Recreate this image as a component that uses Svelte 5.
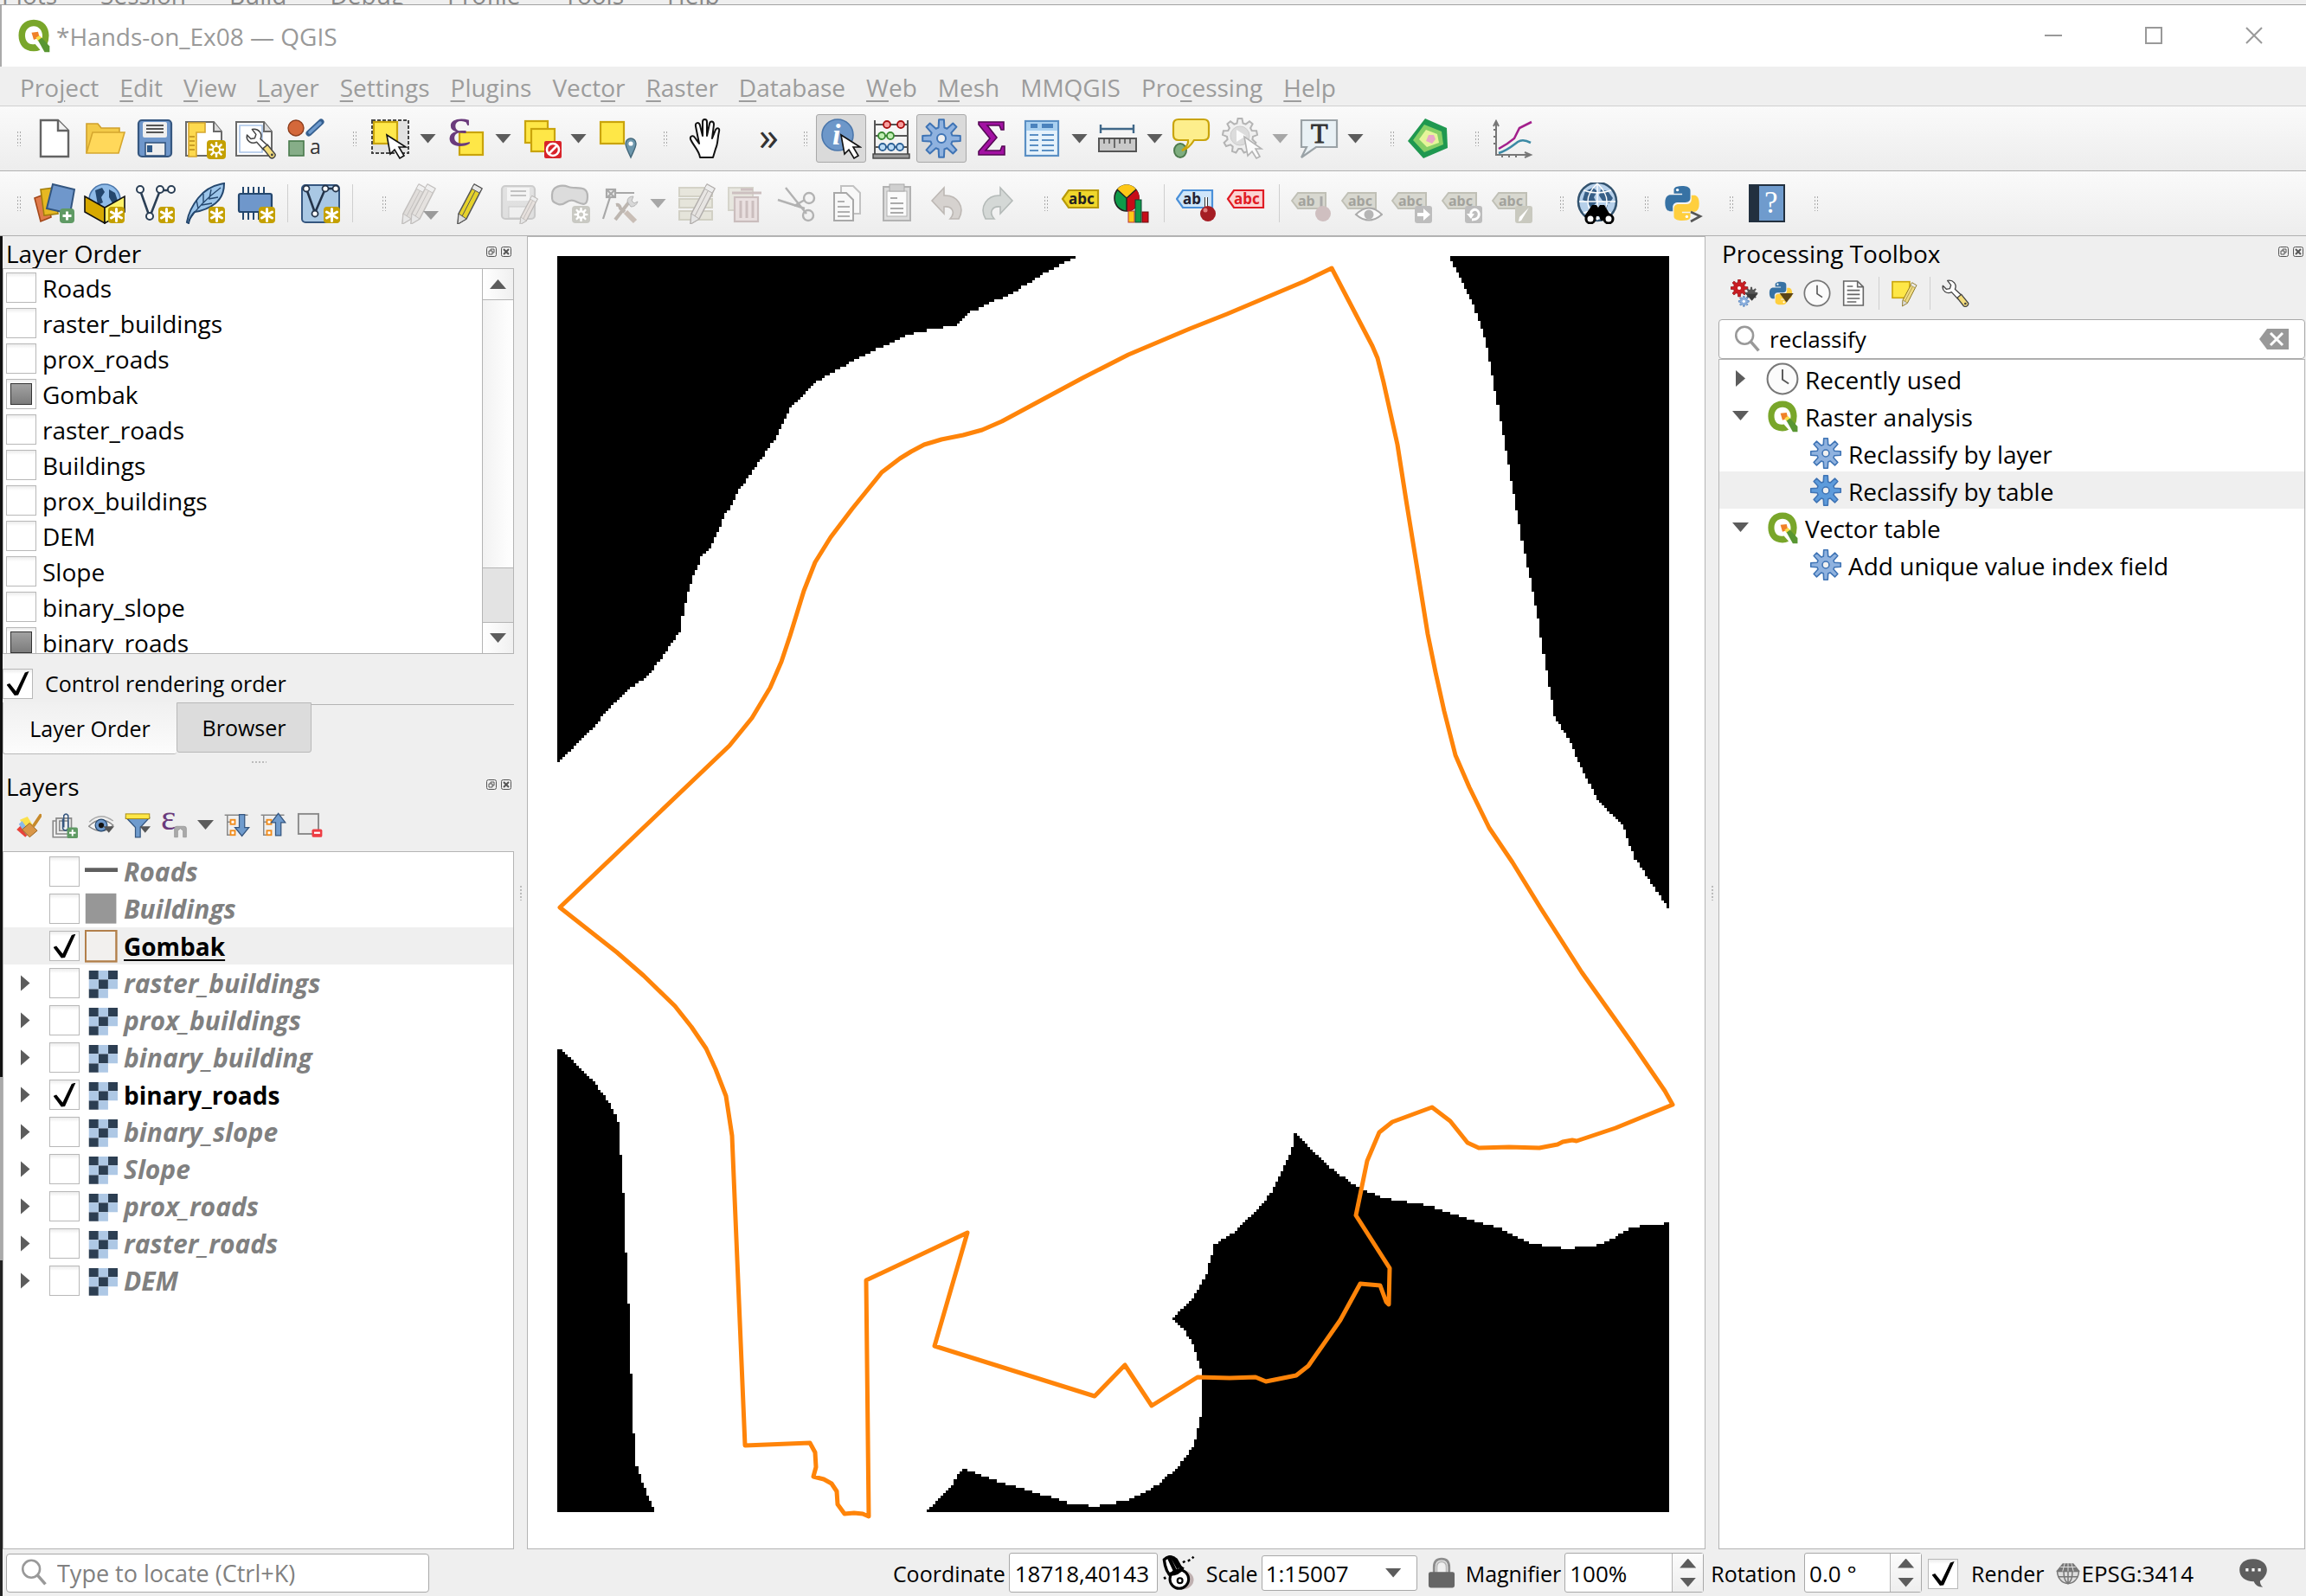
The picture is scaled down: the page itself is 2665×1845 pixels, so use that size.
<script>
  // Outline of a cog wheel with n rounded teeth.
  function cog(cx, cy, outer, inner, n) {
    let d = '';
    const step = (Math.PI * 2) / n;
    for (let i = 0; i < n; i++) {
      const a = i * step - Math.PI / 2;
      const pts = [
        [inner, a - step * 0.34],
        [outer, a - step * 0.17],
        [outer, a + step * 0.17],
        [inner, a + step * 0.34]
      ];
      for (const [r, t] of pts) {
        d += (d ? 'L' : 'M') + (cx + r * Math.cos(t)).toFixed(1) + ' ' + (cy + r * Math.sin(t)).toFixed(1);
      }
    }
    return d + 'z';
  }

  const gearBadge = `<rect x="26" y="26" width="22" height="22" rx="4" fill="#c4a000"/><path d="${cog(37, 37, 9, 5, 8)}" fill="#fff"/><circle cx="37" cy="37" r="3" fill="#c4a000"/>`;
  const starBadge = `<rect x="28" y="28" width="19" height="19" rx="4" fill="#c4a000"/><path d="M37.500 30.500v14M31.500 34l12 7M31.500 41l12-7" stroke="#fff" stroke-width="3" stroke-linecap="round"/>`;
  const cursor = `<path d="M20 20l4 22 5-5 6 10 5-3-6-10h8z" fill="#fff" stroke="#111" stroke-width="1.600"/>`;
  const pencil = (fill, line) => `<path d="M33 2l9 5-18 35-10 6 1-12z" fill="${fill}" stroke="${line}" stroke-width="1.600" stroke-linejoin="round"/><path d="M33 2l9 5-3 5-9-5z" fill="#e8e8e8" stroke="${line}"/><path d="M15 36l9 6-10 6z" fill="#ddd" stroke="${line}"/><path d="M34 10L19 39" stroke="${line}" stroke-width="1"/>`;
  const tag = (fill, line, ink, txt) => `<path d="M1 24L8 14H42V34H8z" fill="${fill}" stroke="${line}" stroke-width="2.200"/><text x="8" y="30" font-family="Noto Sans" font-weight="700" font-size="17" fill="${ink}">${txt}</text>`;
  const greyTag = (txt) => `<path d="M1 21L8 12H40V30H8z" fill="#d8d8d0" stroke="#c0c0b6" stroke-width="2"/><text x="8" y="27" font-family="Noto Sans" font-weight="700" font-size="16" fill="#a2a29c">${txt}</text>`;
  const snakeHalf = (fill) => `<path d="M23.900 4c-10 0-9.400 4.300-9.400 4.300v4.500h9.600v1.400H10.700S4.300 13.400 4.300 23.600s5.600 9.600 5.600 9.600h3.300v-4.700s-.2-5.600 5.500-5.600h9.500s5.300.1 5.300-5.100V9.300S34.300 4 23.900 4z" fill="${fill}"/><circle cx="18.600" cy="8.600" r="1.700" fill="#fff"/>`;
  const snake = `${snakeHalf('#3772a4')}<g transform="rotate(180 24 24)">${snakeHalf('#ffcf3e')}</g>`;
  const vnodes = (c) => `<path d="M7 9L18 40L30 9H43" fill="none" stroke="${c}" stroke-width="2.600"/><circle cx="7" cy="8" r="4" fill="#fff" stroke="${c}" stroke-width="2"/><circle cx="18" cy="39" r="4" fill="#fff" stroke="${c}" stroke-width="2"/><circle cx="30" cy="8" r="4" fill="#fff" stroke="${c}" stroke-width="2"/><circle cx="43" cy="8" r="4" fill="#fff" stroke="${c}" stroke-width="2"/>`;
  const wrench = `<path d="M10 2l6 8-2 6-6 1-6-6c-2 9 7 15 15 11l11 12 7-6-12-11c4-8-3-17-13-15z" fill="#fff" stroke="#444" stroke-width="2" stroke-linejoin="round"/><path d="M27 32l7-6 12 15c1 4-4 8-8 5z" fill="#f3dc7c" stroke="#444" stroke-width="2"/><circle cx="41" cy="42" r="2" fill="#444"/>`;
  const clock = `<circle cx="24" cy="24" r="22" fill="#fbfbfb" stroke="#777" stroke-width="2.600"/><path d="M24 10V25L33 31" fill="none" stroke="#555" stroke-width="2.400"/>`;
  const blueGear = (f) => `<path d="${cog(24, 24, 22, 13, 8)}" fill="${f}" stroke="#3f74b5" stroke-width="2" stroke-linejoin="round"/><circle cx="24" cy="24" r="5" fill="#f0f0f0" stroke="#3f74b5" stroke-width="2"/>`;
  const globe = `<circle cx="24" cy="22" r="22" fill="#b6d0ea" stroke="#33536f" stroke-width="2.600"/><path d="M10 10l9-4 5 4-4 7 3 6-6 7-5-8-5-2zM28 8l8 2 6 8-4 6-8-3-4-6zM28 28l8-2-3 8-5 2z" fill="#375f87"/><path d="M24 1v42M3 22h42M8 9q16 6 32 0M8 35q16-6 32 0M24 1Q2 22 24 43M24 1Q46 22 24 43" fill="none" stroke="#fff" stroke-width="1.400"/>`;
  const tree = `<path d="M1 5H44M6 5V42H16M6 18H16" fill="none" stroke="#888" stroke-width="2.400"/><rect x="12" y="14" width="8" height="8" fill="#fff" stroke="#f08c1c" stroke-width="3"/><rect x="12" y="34" width="8" height="8" fill="#fff" stroke="#f08c1c" stroke-width="3"/>`;

  const icons = {
    page: `<path d="M8 3H28L40 15V45H8z" fill="#fff" stroke="#636363" stroke-width="2.400"/><path d="M28 3V15H40" fill="#f2f2f2" stroke="#636363" stroke-width="2.400"/>`,
    folder: `<path d="M3 7H16L20 12H41V20L40 40H3z" fill="#f3ca49" stroke="#cfa02c" stroke-width="1.600"/><path d="M10 17H47L40 41H3z" fill="#ffd85a" stroke="#d5a62e" stroke-width="1.600"/>`,
    disk: `<rect x="5" y="3" width="38" height="42" rx="4" fill="#6f97cb" stroke="#35567f" stroke-width="2.200"/><rect x="10" y="5" width="28" height="18" rx="2" fill="#efefef"/><path d="M14 9H34M14 13H34M14 17H34" stroke="#555" stroke-width="1.800"/><rect x="13" y="29" width="23" height="15" fill="#eee" stroke="#35567f" stroke-width="1.600"/><rect x="15" y="32" width="6" height="8" fill="#2f5a89"/>`,
    layout: `<path d="M2 5H34L43 16V44H2z" fill="#fff" stroke="#6a6a6a" stroke-width="2"/><path d="M34 5V16H43" fill="#ddd" stroke="#6a6a6a" stroke-width="2"/><path d="M5 6H24V17H14V45H5z" fill="#fdd94e" stroke="#d5a62e" stroke-width="1.600"/><path d="M6 22h6M6 27h6M6 32h6M6 37h6" stroke="#b98b1a" stroke-width="1.400"/>${gearBadge}`,
    manager: `<path d="M2 5H34L43 16V44H2z" fill="#fff" stroke="#6a6a6a" stroke-width="2"/><path d="M34 5V16H43" fill="#ddd" stroke="#6a6a6a" stroke-width="2"/><path d="M6 9H32V40H6z" fill="none" stroke="#a9c4e8" stroke-width="1.600"/><g transform="translate(13 12) scale(.74)">${wrench}</g>`,
    style: `<circle cx="13" cy="12" r="9" fill="#d4683a" stroke="#8c3d1c" stroke-width="1.400"/><path d="M28 18L42 5" stroke="#355f8f" stroke-width="7" stroke-linecap="round"/><path d="M29 17L41 6" stroke="#6f9bcd" stroke-width="3.500" stroke-linecap="round"/><rect x="5" y="27" width="17" height="17" fill="#86ad88" stroke="#48794b" stroke-width="1.600"/><text x="29" y="42" font-family="Open Sans" font-size="23" fill="#333">a</text>`,
    select: `<rect x="3" y="3" width="42" height="38" fill="#e2e2e2" stroke="#444" stroke-width="2" stroke-dasharray="4 2"/><rect x="5" y="5" width="27" height="25" fill="#ffe84b" stroke="#c9a40b" stroke-width="2.200"/>${cursor}`,
    expr: `<rect x="17" y="17" width="27" height="26" fill="#fee747" stroke="#c9a40b" stroke-width="2.200"/><text x="3" y="32" font-family="Liberation Serif" font-size="66" fill="#6a3a7c">ε</text>`,
    deselect: `<rect x="6" y="4" width="26" height="25" fill="#fee747" stroke="#c9a40b" stroke-width="2.200"/><rect x="13" y="13" width="27" height="26" fill="#fee747" stroke="#c9a40b" stroke-width="2.200"/><rect x="28" y="27" width="20" height="20" rx="2" fill="#d8232a"/><circle cx="38" cy="37" r="7" fill="none" stroke="#fff" stroke-width="2.600"/><path d="M33 42L43 32" stroke="#fff" stroke-width="2.600"/>`,
    locate: `<rect x="6" y="5" width="27" height="25" fill="#fee747" stroke="#c9a40b" stroke-width="2.200"/><path d="M41 46C37 37 35 34 35 30a6 6 0 0 1 12 0c0 4-2 7-6 16z" fill="#6d97ad" stroke="#45697c" stroke-width="1.400"/><circle cx="41" cy="30" r="2.600" fill="#fff"/>`,
    hand: `<g transform="translate(4 0)"><path d="M19 46C18 38 11 32 8 25c-1-4 3-5 5-2l5 7L14 10c-1-5 4-5 5-1l3 12V5c0-4 5-4 5 0v16l3-14c1-4 5-3 5 1l-2 16 4-10c2-3 5-2 4 2-2 8-1 14-4 20l-3 10z" fill="#fff" stroke="#111" stroke-width="2" stroke-linejoin="round"/></g>`,
    info: `<circle cx="20" cy="20" r="18" fill="#6d97c9" stroke="#4a76ab" stroke-width="1.600"/><text x="14" y="31" font-family="Liberation Serif" font-style="italic" font-weight="700" font-size="34" fill="#fff">i</text><g transform="translate(4 0)">${cursor}</g>`,
    abacus: `<path d="M5 3V44M43 3V44M5 8H43M5 21H43M5 34H43" stroke="#555" stroke-width="2"/><rect x="3" y="42" width="42" height="5" fill="#999" stroke="#444" stroke-width="1.400"/><g stroke-width="1.800"><g fill="#f8a0a0" stroke="#a11"><circle cx="19" cy="8" r="4"/><circle cx="35" cy="8" r="4"/></g><g fill="#c2efb4" stroke="#3a8a33"><circle cx="13" cy="21" r="4"/><circle cx="23" cy="21" r="4"/></g><g fill="#bcdcf6" stroke="#2b6095"><circle cx="14" cy="34" r="4"/><circle cx="24" cy="34" r="4"/><circle cx="34" cy="34" r="4"/></g></g>`,
    gear: blueGear('#8fb2df'),
    gearDark: blueGear('#5d9bdb'),
    sigma: `<path d="M9 5H38V14H35L33 9H19L30 23L17 38H34L36 33H39V43H9V39L22 24L9 8z" fill="#a311a3" stroke="#560956" stroke-width="1.600"/>`,
    table: `<rect x="5" y="4" width="38" height="40" fill="#e6f2fb" stroke="#5a8fc4" stroke-width="2.200"/><rect x="6" y="5" width="36" height="10" fill="#a9d0f0"/><rect x="11" y="7" width="8" height="5" fill="#4a82bd"/><rect x="24" y="7" width="13" height="5" fill="#4a82bd"/><path d="M10 20h10M24 20h14M10 26h10M24 26h14M10 32h10M24 32h14M10 38h10M24 38h14" stroke="#5a8fc4" stroke-width="2"/>`,
    ruler: `<path d="M5 13H43M5 8V18M43 8V18" stroke="#3f6788" stroke-width="2.400"/><rect x="3" y="24" width="43" height="15" fill="#c9c9c9" stroke="#555" stroke-width="2"/><path d="M9 24v6M15 24v6M21 24v11M27 24v6M33 24v6M39 24v6" stroke="#444" stroke-width="1.400"/>`,
    tip: `<ellipse cx="10" cy="38" rx="7" ry="8" fill="#7fae7f" stroke="#4d7a4d" stroke-width="2"/><path d="M8 2H37q6 0 6 6V20q0 6-6 6H26Q20 36 12 38 20 32 19 26H8q-6 0-6-6V8q0-6 6-6z" fill="#fdee8c" stroke="#c9a40b" stroke-width="2.200"/>`,
    run: `<g opacity=".7"><path d="${cog(21, 21, 20, 15, 9)}" fill="#eee" stroke="#999" stroke-width="2"/><circle cx="21" cy="21" r="11" fill="#d2d2d2" stroke="#bbb"/><path d="M17 14L28 21L17 28z" fill="#fff"/><path d="M26 22l4 22 5-5 5 8 4-2-5-9h7z" fill="#fff" stroke="#999" stroke-width="1.600"/></g>`,
    text: `<g transform="translate(3 0)"><path d="M2 3H43V34H19L2 46L8 34H2z" fill="#e9f1f5" stroke="#9aa2a6" stroke-width="2.200"/><text x="13" y="29" font-family="Liberation Serif" font-size="32" fill="#333" stroke="#333">T</text></g>`,
    penta: `<path d="M21 1L46 12L47 35L19 47L1 27z" fill="#1f9850"/><path d="M20 8L40 16L42 31L20 40L7 26z" fill="#87cf66"/><path d="M22 14L35 19L37 29L23 34L14 25z" fill="#e6f59a"/><path d="M25 20h6l2 5-4 5-7-3z" fill="#eaa8c8"/>`,
    chart: `<path d="M5 44V6M2 10L5 4L8 10M5 43H43M38 40L45 43L38 46M5 14h-3M5 22h-3M5 30h-3M12 43v3M20 43v3M28 43v3" fill="none" stroke="#777" stroke-width="2"/><path d="M8 36L18 30L26 24L32 12L46 5" fill="none" stroke="#a31f8c" stroke-width="2.600"/><path d="M8 41C18 38 22 34 30 28Q36 24 45 29" fill="none" stroke="#3c8aa5" stroke-width="2.600"/>`,
    addLayer: `<path d="M1 18L14 13L20 40L8 45z" fill="#e07a4a" stroke="#a34719" stroke-width="1.600"/><path d="M8 8L24 6L28 36L12 38z" fill="#e6b822" stroke="#a37e0c" stroke-width="1.600"/><path d="M22 2L47 8L42 36L15 30z" fill="#6f97cb" stroke="#33557f" stroke-width="2"/><rect x="30" y="30" width="17" height="17" rx="4" fill="#5f9a64"/><path d="M38.500 33.500v10M33.500 38.500h10" stroke="#fff" stroke-width="3"/>`,
    box: `<circle cx="24" cy="20" r="18" fill="#8fbbe8" stroke="#4a76ab" stroke-width="1.600"/><path d="M13 9l8-3 3 5-4 6 2 6-6 3zM29 8l7 4 3 9-6 3-4-7z" fill="#24476e"/><path d="M1 16L24 29L24 47L1 34z" fill="#d7a900" stroke="#111" stroke-width="1.600"/><path d="M24 29L47 16V34L24 47z" fill="#fdf26a" stroke="#111" stroke-width="1.600"/>${starBadge}`,
    vnew: `${vnodes('#2b3f55')}${starBadge}`,
    feather: `<path d="M3 46Q5 32 16 18T46 1Q46 16 36 24T12 34Q7 38 5 47z" fill="#9cc5ea" stroke="#24476e" stroke-width="2"/><path d="M5 44Q18 24 42 6M16 30L14 20M22 24L22 13M29 18L31 8M20 26L32 24M28 19L39 17" fill="none" stroke="#24476e" stroke-width="1.400"/>${starBadge}`,
    chip: `<path d="M10 5v38M16 5v38M22 5v38M28 5v38M34 5v38" stroke="#24476e" stroke-width="2"/><rect x="5" y="13" width="38" height="21" rx="2" fill="#6f97cb" stroke="#24476e" stroke-width="2.200"/>${starBadge}`,
    vbox: `<rect x="3" y="3" width="43" height="43" rx="4" fill="#a9c8e4" stroke="#35567f" stroke-width="2"/><path d="M8 7L18 35L30 7H42" fill="none" stroke="#24344a" stroke-width="2.600"/><g fill="#fff" stroke="#24344a" stroke-width="1.800"><circle cx="8" cy="7" r="3.500"/><circle cx="18" cy="36" r="3.500"/><circle cx="30" cy="7" r="3.500"/><circle cx="42" cy="7" r="3.500"/></g>${starBadge}`,
    pencils: `<g opacity=".45"><g transform="translate(-10 0)">${pencil('#c9c2bc', '#8a8480')}</g>${pencil('#d5cec8', '#8a8480')}</g><path d="M28 33H46L37 43z" fill="#9a9a9a"/>`,
    pencil: `<g transform="translate(-4 0)">${pencil('#e6d22a', '#555')}</g>`,
    diskOff: `<g opacity=".55"><rect x="3" y="4" width="38" height="38" rx="4" fill="#d2d2d2" stroke="#aaa" stroke-width="2.200"/><rect x="9" y="6" width="26" height="15" fill="#f4f4f4"/><path d="M13 10H31M13 15H31" stroke="#999" stroke-width="1.800"/><rect x="11" y="28" width="20" height="13" fill="#eee" stroke="#aaa"/><g transform="translate(14 14) scale(.72)">${pencil('#ddd2cc', '#8a8480')}</g></g>`,
    blob: `<path d="M3 14C3 4 14 2 22 5S44 2 44 16 36 24 28 21 18 28 10 25 3 20 3 14z" fill="#dcdcdc" stroke="#b5b5b5" stroke-width="2.200"/><rect x="26" y="27" width="21" height="20" rx="4" fill="#c9c9c3"/><path d="${cog(36.5, 37, 8, 5, 8)}" fill="#fff"/><circle cx="36.500" cy="37" r="2.500" fill="#c9c9c3"/>`,
    vertex: `<g fill="none" stroke="#a8a8a8" stroke-width="2.200"><rect x="8" y="8" width="10" height="9" fill="#eee"/><path d="M18 12H40M12 17L4 42M9 9l8 8M17 9l-8 8"/></g><path d="M36 20L18 43" stroke="#bdb6b0" stroke-width="4"/><path d="M19 26q4-1 5 4l5 4" fill="none" stroke="#bdb6b0" stroke-width="4"/><path d="M30 34L41 45" stroke="#c9beb6" stroke-width="6"/><path d="M32 22q0-6 7-6l-2 5 3 3 4-2q-2 6-8 6z" fill="#d8d8d8" stroke="#b5b5b5"/>`,
    editRows: `<g opacity=".6"><g fill="#dedccc" stroke="#bdbba8" stroke-width="2"><rect x="5" y="6" width="38" height="10"/><rect x="5" y="19" width="38" height="10"/><rect x="5" y="33" width="38" height="10"/></g><g transform="translate(4 0)">${pencil('#e0dcd8', '#8a8480')}</g></g>`,
    trash: `<g opacity=".5"><rect x="4" y="6" width="28" height="26" fill="#dcdacb" stroke="#b8b6a4" stroke-width="2"/><rect x="11" y="17" width="27" height="28" fill="#e2cfcf" stroke="#a58b8b" stroke-width="2.200"/><path d="M8 12H42M18 8h14M18 21v20M25 21v20M32 21v20" stroke="#a58b8b" stroke-width="3"/></g>`,
    cut: `<g fill="none" stroke="#b2b2b2" stroke-width="2.400"><path d="M3 20L34 30M12 6L36 36"/><circle cx="39" cy="18" r="6"/><circle cx="38" cy="38" r="6"/><path d="M34 20L22 27"/></g>`,
    copy: `<g fill="#f8f8f8" stroke="#c2c2c2" stroke-width="2"><path d="M18 4H32L40 12V36H18z"/><path d="M10 12H24L32 20V44H10z" stroke="#a8a8a8"/></g><path d="M14 22h8M14 28h14M14 34h14M14 39h14" stroke="#b0b0b0" stroke-width="2"/>`,
    paste: `<rect x="9" y="5" width="31" height="39" fill="#dcdcdc" stroke="#b2b2b2" stroke-width="2"/><rect x="13" y="10" width="23" height="29" fill="#fafafa" stroke="#b2b2b2"/><rect x="16" y="2" width="17" height="8" fill="#d0d0d0" stroke="#aaa"/><path d="M17 18h8M17 24h15M17 30h15M17 35h15" stroke="#aaa" stroke-width="2"/>`,
    undo: `<path d="M7 21L21 6V15C36 14 46 28 38 42H28C35 34 30 27 21 28V36z" fill="#d6d2cf" stroke="#bdb8b4" stroke-width="1.600"/>`,
    redo: `<path d="M42 21L28 6V15C13 14 3 28 11 42H21C14 34 19 27 28 28V36z" fill="#d4d8d6" stroke="#b4bab8" stroke-width="1.600"/>`,
    abc: `<g transform="translate(1 -5)">${tag('#f0d72c', '#b89a0a', '#222', 'abc')}</g>`,
    pie: `<ellipse cx="18" cy="18" rx="14" ry="15" fill="#0f9a4a" stroke="#222" stroke-width="1.600"/><path d="M18 18L7 8A14 15 0 0 1 29 8z" fill="#fdc716"/><path d="M18 18L29 8A14 15 0 0 1 18 33z" fill="#c80d18"/><path d="M18 18V33M18 18L7 8M18 18L29 8" stroke="#222" stroke-width="1.400"/><rect x="20" y="33" width="7" height="13" fill="#fdc716" stroke="#b33"/><rect x="28" y="20" width="7" height="26" fill="#0f9a4a" stroke="#143"/><rect x="36" y="34" width="7" height="12" fill="#c80d18" stroke="#611"/>`,
    pin: `<g transform="translate(0 -5)">${tag('#cfe6fa', '#4a90d9', '#223', 'ab')}</g><path d="M35 17v16" stroke="#333" stroke-width="4"/><path d="M35 17v16" stroke="#fff" stroke-width="2"/><circle cx="37" cy="36" r="9" fill="#a51d24"/><circle cx="34" cy="32" r="2.500" fill="#e08080"/>`,
    redAbc: `<g transform="translate(1 -5)">${tag('#fbd3d3', '#e01b24', '#e01b24', 'abc')}</g>`,
    g1: `${greyTag('ab')}<path d="M35 16v16" stroke="#aaa" stroke-width="3"/><circle cx="37" cy="36" r="9" fill="#cfbfc0"/>`,
    g2: `${greyTag('abc')}<path d="M17 37Q32 22 47 37 32 50 17 37z" fill="#fafafa" stroke="#aaa" stroke-width="2"/><circle cx="32" cy="37" r="5.500" fill="#b5b5b5"/>`,
    g3: `${greyTag('abc')}<rect x="27" y="27" width="20" height="20" rx="3" fill="#bdbdbd"/><path d="M30 35h7v-5l8 7-8 7v-5h-7z" fill="#fff"/>`,
    g4: `${greyTag('abc')}<rect x="27" y="27" width="20" height="20" rx="3" fill="#bdbdbd"/><path d="M35 43c8 0 10-6 7-10-4-4-9 0-8 4" fill="none" stroke="#fff" stroke-width="2.800"/><path d="M29 36h9l-4 6z" fill="#fff"/>`,
    g5: `${greyTag('abc')}<rect x="27" y="27" width="20" height="20" rx="3" fill="#c9c9bf"/><path d="M43 29L34 44 31 45 32 40z" fill="#fff"/>`,
    webGlobe: `${globe}<path d="M18 26h5l2 3 2-3h5l8 13-4 5h-8l-2-5h-3l-2 5h-8l-4-5z" fill="#000"/><circle cx="16" cy="42" r="5" fill="#fff" stroke="#000" stroke-width="3"/><circle cx="37" cy="42" r="5" fill="#fff" stroke="#000" stroke-width="3"/>`,
    python: `${snake}<path d="M34 34L45 39L34 45" fill="none" stroke="#555" stroke-width="2.600"/>`,
    help: `<rect x="4" y="3" width="40" height="42" fill="#6f9bcd" stroke="#22303f" stroke-width="2"/><rect x="5" y="4" width="10" height="40" fill="#22303f"/><text x="21" y="35" font-family="Liberation Serif" font-size="35" fill="#fff">?</text>`,
    // dock toolbars
    brush: `<path d="M2 32L12 22L26 38L18 46z" fill="#e8433a"/><path d="M8 14L22 8L32 24L20 34z" fill="#fbe14c"/><path d="M6 22L12 16L26 36L20 42z" fill="#8ab9e8"/><path d="M26 20L40 34L26 46L12 32z" fill="#d99648" stroke="#9a6420" stroke-width="1.600"/><path d="M34 24L46 6" stroke="#c78a2c" stroke-width="6" stroke-linecap="round"/>`,
    clip: `<g fill="none" stroke="#888" stroke-width="2.600"><path d="M8 16H2V46H32"/><path d="M8 11H36V40H8z"/><path d="M14 16H30V34H14z"/></g><path d="M22 28V6q4-6 8 0V30q-5 7-10 0V12" fill="none" stroke="#35567f" stroke-width="2.400"/><rect x="28" y="28" width="20" height="20" rx="3" fill="#5f9a64"/><path d="M38 32v12M32 38h12" stroke="#fff" stroke-width="3"/>`,
    eye: `<path d="M1 26Q23 4 46 24 26 44 1 26z" fill="#f6f6f6" stroke="#888" stroke-width="2.400"/><path d="M2 18Q22-2 46 16" fill="none" stroke="#aaa" stroke-width="2.400"/><circle cx="24" cy="24" r="11" fill="#6d97c9" stroke="#24476e" stroke-width="2"/><circle cx="24" cy="24" r="5" fill="#111"/><path d="M28 26H48L38 38z" fill="#555"/>`,
    funnel: `<path d="M3 10H46L29 28V46H20V28z" fill="#6f9bcd" stroke="#35567f" stroke-width="2"/><rect x="2" y="3" width="44" height="9" fill="#fee747" stroke="#a98c10" stroke-width="1.600"/><path d="M28 26H48L38 38z" fill="#555"/>`,
    epsFilter: `<text x="0" y="32" font-family="Liberation Serif" font-size="66" fill="#6a3a7c">ε</text><path d="M25 46V30q0-4 4-4h14q4 0 4 4V46h-6V34l-5-4-5 4V46z" fill="#aaa" stroke="#888"/>`,
    expand: `${tree}<path d="M28 4H38V28H46L33 44L20 28H28z" fill="#6f9bcd" stroke="#35567f" stroke-width="2"/>`,
    collapse: `${tree}<path d="M28 43H38V19H46L33 2L20 19H28z" fill="#6f9bcd" stroke="#35567f" stroke-width="2"/>`,
    remove: `<rect x="3" y="3" width="37" height="37" fill="#ececec" stroke="#888" stroke-width="3"/><rect x="28" y="31" width="19" height="15" rx="3" fill="#ee3e44"/><path d="M32 38h11" stroke="#fff" stroke-width="3.600"/>`,
    gears: `<path d="${cog(15, 15, 15, 10, 8)}" fill="#c81d22" stroke="#8a1014"/><circle cx="15" cy="15" r="3" fill="#fff"/><path d="${cog(36, 24, 11, 7, 8)}" fill="#555"/><path d="${cog(23, 38, 9, 6, 8)}" fill="#8fb2df" stroke="#3f74b5"/><circle cx="23" cy="38" r="2.500" fill="#fff"/><path d="M26 25H47L37 37z" fill="#3a3a3a"/>`,
    pyMenu: `${snake}<path d="M22 24H46L34 40z" fill="#5a4418"/>`,
    clock,
    doc: `<path d="M7 3H31L41 13V45H7z" fill="#fff" stroke="#666" stroke-width="2.400"/><path d="M31 3V13H41M13 12h10M13 19h22M13 26h22M13 33h22M13 39h16" fill="none" stroke="#666" stroke-width="2.400"/>`,
    note: `<rect x="3" y="4" width="30" height="28" fill="#fee747" stroke="#c9a40b" stroke-width="2.400"/><g transform="translate(8 4) scale(.88)">${pencil('#f0dc84', '#8a7420')}</g>`,
    wrench,
    qgis: `<path d="M24 2C10 2 3 12 3 24s7 22 21 22q5 0 9-2l-7-8C17 38 12 32 12 24S17 11 24 11s12 6 12 13q0 4-1 6l7 8q3-6 3-14C45 12 38 2 24 2z" fill="#79a62a"/><path d="M21 20L30 19L32 27L24 30z" fill="#f08128"/><path d="M27 27L32 24L36 28L30 32z" fill="#f9e04a"/><path d="M30 31L35 27L46 39V47H39z" fill="#589632"/>`,
    raster: `<path d="M6 5h14v13H6zM34 5h14v13H34zM20 18h14v14H20zM6 32h14v13H6z" fill="#2c3e52"/><path d="M20 5h14v13H20zM6 18h14v14H6zM34 18h14v14H34zM20 32h14v13H20z" fill="#aec8e5"/>`,
    line: `<path d="M0 21H48" stroke="#5f5f5f" stroke-width="6"/>`,
    fill: `<rect x="1" y="1" width="45" height="44" fill="#979797"/>`,
    outline: `<rect x="1" y="1" width="45" height="45" fill="#f2f0ee" stroke="#b27f4a" stroke-width="3"/>`,
    lens: `<circle cx="20" cy="18" r="14" fill="none" stroke="#999" stroke-width="3.600"/><path d="M30 28L43 43" stroke="#999" stroke-width="5"/>`,
    mouse: `<ellipse cx="30" cy="34" rx="15" ry="13" fill="#bfb0b0"/><path d="M4 6q8-8 17 0l9 16-15 8q-9-6-11-24z" fill="#fff" stroke="#000" stroke-width="4"/><path d="M11 4l8 17M16 3l8 15" stroke="#000" stroke-width="5"/><ellipse cx="25" cy="33" rx="13" ry="13" fill="#fff" stroke="#000" stroke-width="3.600"/><circle cx="26" cy="35" r="3.500" fill="none" stroke="#000" stroke-width="2.600"/><path d="M12 26q12 0 18-10" fill="none" stroke="#000" stroke-width="5"/><path d="M30 10l3-2M37 8l3-2M43 4l2-2M4 30l2 3" stroke="#000" stroke-width="3"/>`,
    lock: `<path d="M13 26V16q0-12 11-12t11 12V26" fill="none" stroke="#8d8d8d" stroke-width="3.600"/><path d="M17 26V16q0-8 7-8t7 8V26" fill="none" stroke="#b5b5b5" stroke-width="2"/><rect x="5" y="23" width="38" height="23" rx="3" fill="#666"/>`,
    crs: `<path d="M14 5H34L46 20H2z" fill="#777"/><path d="M4 20C6 50 42 50 44 20z" fill="#ddd" stroke="#777" stroke-width="2.400"/><path d="M16 20q0 18 8 22 8-4 8-22M6 30H42M24 20V44" fill="none" stroke="#777" stroke-width="2.400"/><path d="M10 12H38M18 5L14 20M30 5L34 20M24 5V20" stroke="#ddd" stroke-width="1.600"/>`,
    chat: `<path d="M24 4c12 0 20 7 20 16 0 8-6 14-10 16 0 5 2 7 4 9-7 0-11-3-13-8C12 37 4 30 4 20S12 4 24 4z" fill="#5e5e5e"/><path d="M13 20h4M22 20h4M31 20h4" stroke="#fff" stroke-width="4.500"/>`
  };

  const behind = ['Plots', 'Session', 'Build', 'Debug', 'Profile', 'Tools', 'Help'];

  // A "_" comes before the mnemonic letter.
  const menus = ['Pro_ject', '_Edit', '_View', '_Layer', '_Settings', '_Plugins', 'Vect_or', '_Raster', '_Database', '_Web', '_Mesh', 'MMQGIS', 'Pro_cessing', '_Help'].map((m) => {
    const i = m.indexOf('_');
    return i < 0 ? [m, '', ''] : [m.slice(0, i), m[i + 1], m.slice(i + 2)];
  });

  const bars = [
    ['page', 'folder', 'disk', 'layout', 'manager', 'style', '|', 'select', 'v', 'expr', 'v', 'deselect', 'v', 'locate', '|', 'hand', '»', '|', 'info*', 'abacus', 'gear*', 'sigma', 'table', 'v', 'ruler', 'v', 'tip', 'run', 'vo', 'text', 'v', '|', 'penta', '|', 'chart'],
    ['addLayer', 'box', 'vnew', 'feather', 'chip', '-', 'vbox', '-', '|', 'pencils', 'pencil', 'diskOff', 'blob', 'vertex', 'vo', 'editRows', 'trash', 'cut', 'copy', 'paste', 'undo', 'redo', '|', 'abc', 'pie', '-', 'pin', 'redAbc', '-', 'g1', 'g2', 'g3', 'g4', 'g5', '|', 'webGlobe', '|', 'python', '|', 'help', '|']
  ];

  const order = [
    ['Roads', 0], ['raster_buildings', 0], ['prox_roads', 0], ['Gombak', 1], ['raster_roads', 0], ['Buildings', 0],
    ['prox_buildings', 0], ['DEM', 0], ['Slope', 0], ['binary_slope', 0], ['binary_roads', 1]
  ];

  const layers = [
    { name: 'Roads', icon: 'line' },
    { name: 'Buildings', icon: 'fill' },
    { name: 'Gombak', icon: 'outline', on: true, current: true },
    { name: 'raster_buildings', icon: 'raster' },
    { name: 'prox_buildings', icon: 'raster' },
    { name: 'binary_building', icon: 'raster' },
    { name: 'binary_roads', icon: 'raster', on: true },
    { name: 'binary_slope', icon: 'raster' },
    { name: 'Slope', icon: 'raster' },
    { name: 'prox_roads', icon: 'raster' },
    { name: 'raster_roads', icon: 'raster' },
    { name: 'DEM', icon: 'raster' }
  ];

  const tools = [
    { name: 'Recently used', icon: 'clock', open: false },
    { name: 'Raster analysis', icon: 'qgis', open: true },
    { name: 'Reclassify by layer', icon: 'gear', child: true },
    { name: 'Reclassify by table', icon: 'gearDark', child: true, hover: true },
    { name: 'Vector table', icon: 'qgis', open: true },
    { name: 'Add unique value index field', icon: 'gear', child: true }
  ];

  const zones = [
    '644,296 1246,296 1209,315 1172,338 1120,361 1103,377 1055,385 996,412 942,442 914,472 893,512 856,564 838,596 823,629 811,644 799,671 790,705 786,730 770,753 749,781 725,798 695,830 644,884',
    '1674,296 1691,327 1702,350 1715,387 1722,419 1731,469 1744,541 1754,596 1762,641 1775,700 1788,780 1797,830 1807,844 1828,887 1848,927 1876,956 1889,991 1929,1052 1929,296',
    '644,1213 650,1213 686,1250 704,1274 714,1294 716,1318 720,1368 724,1458 728,1532 731,1627 735,1691 741,1711 757,1748 644,1748',
    '1070,1748 1086,1731 1102,1714 1110,1701 1115,1698 1146,1710 1198,1726 1238,1738 1266,1741 1304,1735 1330,1722 1361,1697 1379,1672 1388,1639 1390,1612 1388,1582 1379,1555 1367,1535 1355,1524 1379,1501 1395,1470 1403,1440 1432,1420 1461,1391 1480,1358 1493,1331 1497,1310 1533,1346 1568,1372 1603,1386 1647,1393 1700,1410 1735,1421 1771,1438 1810,1444 1850,1439 1880,1422 1894,1418 1911,1416 1929,1414 1929,1748'
  ];

  // Turns a polygon into runs of raster cells.
  function rasterise(text) {
    const p = text.split(' ').map((s) => s.split(',').map(Number));
    const rows = 464;
    const cw = 1285 / 412;
    const ch = 1452 / rows;
    let d = '';
    for (let row = 0; row < rows; row++) {
      const y = 296 + (row + 0.5) * ch;
      const xs = [];
      for (let i = 0; i < p.length; i++) {
        const [x1, y1] = p[i];
        const [x2, y2] = p[(i + 1) % p.length];
        if (y1 <= y !== y2 <= y) xs.push(x1 + ((y - y1) / (y2 - y1)) * (x2 - x1));
      }
      xs.sort((a, b) => a - b);
      const top = Math.round(296 + row * ch);
      const h = Math.round(296 + (row + 1) * ch) - top;
      for (let i = 0; i + 1 < xs.length; i += 2) {
        const a = Math.round(644 + Math.round((xs[i] - 644) / cw) * cw);
        const b = Math.round(644 + Math.round((xs[i + 1] - 644) / cw) * cw);
        if (b > a) d += `M${a} ${top}h${b - a}v${h}h${a - b}z`;
      }
    }
    return d;
  }
  const rasterPath = zones.map(rasterise).join('');

  const boundary =
    '1539,310 1586,400 1592,414 1599,442 1615,514 1625,578 1638,658 1650,733 1659,777 1669,822 1682,873 1698,910 1721,957 1748,997 1780,1049 1828,1124 1887,1207 1924,1261 1933,1277 1867,1304 1822,1319 1817,1318 1806,1320 1800,1323 1779,1327 1744,1326 1709,1327 1696,1321 1676,1296 1655,1280 1609,1297 1594,1309 1580,1342 1567,1405 1606,1466 1605,1508 1602,1505 1595,1486 1572,1484 1549,1526 1512,1579 1498,1590 1463,1597 1451,1592 1421,1593 1384,1592 1331,1625 1300,1578 1265,1614 1080,1556 1118,1425 1001,1480 1004,1753 997,1750 987,1749 976,1750 968,1739 967,1724 961,1715 952,1710 940,1707 943,1696 942,1679 936,1668 861,1671 846,1313 839,1267 827,1236 816,1212 799,1187 780,1163 744,1128 713,1101 647,1049 843,862 869,830 890,795 903,765 913,735 929,683 942,650 960,621 985,588 1019,546 1040,530 1053,522 1068,514 1088,508 1113,503 1135,497 1158,487 1251,437 1304,410 1375,380 1418,363 1508,325';
</script>

{#snippet icon(name, cls)}
  <svg class={cls} viewBox="0 0 48 48" aria-hidden="true">{@html icons[name]}</svg>
{/snippet}

{#snippet dockTitle(name)}
  <header class="dock-title">
    <h2>{name}</h2>
    <button class="mini" aria-label="Float"><svg viewBox="0 0 12 12"><rect x=".5" y=".5" width="11" height="11" rx="2" /><path d="M5 5V3H9V7H7M3 5H7V9H3z" /></svg></button>
    <button class="mini" aria-label="Close"><svg viewBox="0 0 12 12"><rect x=".5" y=".5" width="11" height="11" rx="2" /><path d="M3 3L9 9M9 3L3 9" stroke-width="2" /></svg></button>
  </header>
{/snippet}

<div class="screen">
  <div class="behind">
    {#each behind as b}<span>{b}</span>{/each}
  </div>

  <header class="title-bar">
    {@render icon('qgis', 'i40')}
    <h1>*Hands-on_Ex08 — QGIS</h1>
    <div class="win-buttons">
      <button aria-label="Minimize"><svg viewBox="0 0 20 20"><path d="M0 10H20" /></svg></button>
      <button aria-label="Maximize"><svg viewBox="0 0 20 20"><path d="M1 1H19V19H1z" /></svg></button>
      <button aria-label="Close window"><svg viewBox="0 0 20 20"><path d="M1 1L19 19M19 1L1 19" /></svg></button>
    </div>
  </header>

  <nav class="menu-bar">
    {#each menus as [a, u, b]}<button>{a}<u>{u}</u>{b}</button>{/each}
  </nav>

  {#each bars as bar}
    <div class="tool-bar" role="toolbar">
      <i class="grip first"></i>
      {#each bar as t}
        {#if t === '|'}
          <i class="grip"></i>
        {:else if t === '-'}
          <i class="sep"></i>
        {:else if t === '»'}
          <button class="more">»</button>
        {:else if t === 'v' || t === 'vo'}
          <button class="drop" class:off={t === 'vo'} aria-label="Menu"><i class="tri down"></i></button>
        {:else}
          <button class="tool" class:active={t.endsWith('*')} aria-label={t.replace('*', '')}>{@render icon(t.replace('*', ''), 'i48')}</button>
        {/if}
      {/each}
    </div>
  {/each}

  <main>
    <div class="edge"></div>
    <aside class="left">
      {@render dockTitle('Layer Order')}
      <div class="order">
        <ul>
          {#each order as [name, part]}
            <li><label><input type="checkbox" indeterminate={!!part} />{name}</label></li>
          {/each}
        </ul>
        <div class="scroll">
          <button aria-label="Scroll up"><i class="tri up"></i></button>
          <div class="track"><div class="thumb"></div></div>
          <button aria-label="Scroll down"><i class="tri down"></i></button>
        </div>
      </div>
      <label class="control"><input type="checkbox" checked />Control rendering order</label>
      <div class="tabs">
        <button class="tab on">Layer Order</button>
        <button class="tab">Browser</button>
        <span></span>
      </div>
      <i class="hgrip"></i>
      {@render dockTitle('Layers')}
      <div class="dock-tools">
        {#each ['brush', 'clip', 'eye', 'funnel', 'epsFilter'] as t}<button aria-label={t}>{@render icon(t, 'i30')}</button>{/each}
        <button class="drop" aria-label="Menu"><i class="tri down"></i></button>
        {#each ['expand', 'collapse', 'remove'] as t}<button aria-label={t}>{@render icon(t, 'i30')}</button>{/each}
      </div>
      <ul class="layers">
        {#each layers as l}
          <li class:current={l.current}>
            <span class="twist">{#if l.icon === 'raster'}<i class="tri right"></i>{/if}</span>
            <label class:on={l.on}><input type="checkbox" checked={l.on} />{@render icon(l.icon, 'i38')}<span>{l.name}</span></label>
          </li>
        {/each}
      </ul>
    </aside>
    <div class="split"><i class="vgrip"></i></div>
    <section class="map">
      <svg viewBox="610 274 1360 1516" role="img" aria-label="Map canvas">
        <path d={rasterPath} fill="#000" shape-rendering="crispEdges" />
        <polygon points={boundary} fill="none" stroke="#ff8409" stroke-width="5" stroke-linejoin="round" />
      </svg>
    </section>
    <div class="split"><i class="vgrip"></i></div>
    <aside class="right">
      {@render dockTitle('Processing Toolbox')}
      <div class="dock-tools">
        {#each ['gears', 'pyMenu', 'clock', 'doc'] as t}<button aria-label={t}>{@render icon(t, 'i32')}</button>{/each}
        <i class="sep"></i>
        <button aria-label="Edit in place">{@render icon('note', 'i32')}</button>
        <i class="sep"></i>
        <button aria-label="Options">{@render icon('wrench', 'i32')}</button>
      </div>
      <div class="search">
        {@render icon('lens', 'i34')}
        <input type="text" value="reclassify" aria-label="Search" />
        <button aria-label="Clear"><svg viewBox="0 0 34 24"><path d="M9 0H34V24H9L0 12z" fill="#999" /><path d="M13 5L27 19M27 5L13 19" stroke="#fff" stroke-width="3" /></svg></button>
      </div>
      <ul class="tree">
        {#each tools as t}
          <li class:child={t.child} class:hover={t.hover}>
            {#if !t.child}<span class="twist"><i class="tri" class:down={t.open} class:right={!t.open}></i></span>{/if}
            {@render icon(t.icon, 'i38')}<span>{t.name}</span>
          </li>
        {/each}
      </ul>
    </aside>
  </main>

  <footer>
    <div class="locator">
      {@render icon('lens', 'i34')}
      <input type="text" placeholder="Type to locate (Ctrl+K)" aria-label="Locator" />
    </div>
    <div class="status">
      <label class="field" for="coord">Coordinate</label>
      <input id="coord" class="box coord" type="text" value="18718,40143" />
      <button class="mouse" aria-label="Toggle extents">{@render icon('mouse', 'i40')}</button>
      <label class="field" for="scale">Scale</label>
      <div class="combo">
        <select id="scale"><option>1:15007</option></select>
        <i class="tri down"></i>
      </div>
      <button class="lock" aria-label="Lock scale">{@render icon('lock', 'i38')}</button>
      <label class="field" for="mag">Magnifier</label>
      <div class="spin mag">
        <input id="mag" type="text" value="100%" />
        <div><button aria-label="Up"><i class="tri up"></i></button><button aria-label="Down"><i class="tri down"></i></button></div>
      </div>
      <label class="field rot-label" for="rot">Rotation</label>
      <div class="spin rot">
        <input id="rot" type="text" value="0.0 °" />
        <div><button aria-label="Up"><i class="tri up"></i></button><button aria-label="Down"><i class="tri down"></i></button></div>
      </div>
      <label class="render"><input type="checkbox" checked />Render</label>
      <button class="crs">{@render icon('crs', 'i30')}EPSG:3414</button>
      <button class="chat" aria-label="Messages">{@render icon('chat', 'i38')}</button>
    </div>
  </footer>
</div>

<style>
  :global(body) {
    margin: 0;
    background: #efefef;
    overflow: hidden;
  }
  .screen {
    display: flex;
    flex-direction: column;
    height: 100vh;
    background: #efefef;
    font-family: 'Open Sans', 'Noto Sans', sans-serif;
    font-size: 28px;
    line-height: 40px;
    color: #000;
  }
  .screen *,
  .screen *::before {
    box-sizing: border-box;
  }
  button,
  input,
  select {
    font: inherit;
    color: inherit;
    margin: 0;
    padding: 0;
    border: 0;
    background: none;
    min-width: 0;
    outline: 0;
  }
  h1,
  h2 {
    margin: 0;
    font-size: inherit;
    font-weight: 400;
  }
  ul {
    list-style: none;
    margin: 0;
    padding: 0;
  }
  svg {
    display: block;
    flex: none;
  }
  .i30 { width: 30px; height: 30px; }
  .i32 { width: 32px; height: 32px; }
  .i34 { width: 34px; height: 34px; }
  .i38 { width: 38px; height: 38px; }
  .i40 { width: 40px; height: 40px; }
  .i48 { width: 48px; height: 48px; }

  .behind {
    display: flex;
    gap: 50px;
    height: 6px;
    flex: none;
    padding-left: 2px;
    border-bottom: 1px solid #a2a2a2;
    overflow: hidden;
    color: #888;
    line-height: 12px;
  }
  .behind span {
    margin-top: -12px;
  }
  .title-bar {
    display: flex;
    align-items: center;
    flex: none;
    height: 71px;
    padding: 0 2px 2px 17px;
    background: #fff;
    color: #999;
    border-left: 2px solid #aaa;
  }
  h1 {
    flex: 1;
    padding: 2px 0 0 6px;
  }
  .win-buttons {
    display: flex;
  }
  .win-buttons button {
    width: 116px;
    height: 69px;
    display: grid;
    place-items: center;
  }
  .win-buttons svg {
    width: 20px;
    height: 20px;
    fill: none;
    stroke: #999;
    stroke-width: 2;
  }
  .menu-bar {
    display: flex;
    flex: none;
    gap: 24px;
    height: 46px;
    padding: 3px 0 0 23px;
    color: #9c9c9c;
    border-bottom: 1px solid #d0d0d0;
    white-space: nowrap;
  }
  u {
    text-underline-offset: 4px;
    text-decoration-thickness: 2px;
  }
  .tool-bar {
    display: flex;
    align-items: center;
    flex: none;
    height: 75px;
    background: linear-gradient(#fafafa, #ededed);
    border-bottom: 1px solid #b0b0b0;
  }
  .grip {
    flex: none;
    width: 6px;
    height: 18px;
    margin: 0 9px 0 25px;
    background: radial-gradient(#aaa 1px, transparent 1px) 0 0 / 3px 4px;
  }
  .grip.first {
    margin-left: 19px;
  }
  .sep {
    flex: none;
    width: 1px;
    height: 44px;
    margin: 0 8px;
    background: #cfcfcf;
  }
  .tool {
    flex: none;
    display: grid;
    place-items: center;
    width: 58px;
    height: 56px;
    border: 1px solid transparent;
    border-radius: 3px;
  }
  .tool.active {
    background: #dadada;
    border-color: #a8a8a8;
  }
  .more {
    width: 64px;
    padding: 0 0 8px 35px;
    font-size: 46px;
    color: #333;
  }
  .drop {
    flex: none;
    width: 29px;
    display: grid;
    place-items: center;
  }
  .off {
    opacity: 0.5;
  }
  .tri {
    display: block;
    flex: none;
    background: #5c5c5c;
  }
  .tri.down {
    width: 19px;
    height: 11px;
    clip-path: polygon(0 0, 100% 0, 50% 100%);
  }
  .tri.up {
    width: 19px;
    height: 11px;
    clip-path: polygon(0 100%, 100% 100%, 50% 0);
  }
  .tri.right {
    width: 11px;
    height: 19px;
    clip-path: polygon(0 0, 100% 50%, 0 100%);
  }

  main {
    flex: 1;
    min-height: 0;
    display: grid;
    grid-template-columns: 3px 591px 15px minmax(0, 1fr) 15px 678px;
    padding-right: 1px;
  }
  .edge {
    background: linear-gradient(#111 64%, #aaa 64%, #aaa 78%, #222 78%);
  }
  aside {
    display: flex;
    flex-direction: column;
    min-height: 0;
  }
  .dock-title {
    display: flex;
    align-items: center;
    gap: 5px;
    flex: none;
    height: 37px;
    padding: 0 3px 0 4px;
  }
  .dock-title h2 {
    flex: 1;
    padding-top: 3px;
  }
  .mini {
    width: 12px;
    height: 12px;
    margin-bottom: 1px;
  }
  .mini svg {
    width: 12px;
    height: 12px;
    fill: none;
    stroke: #555;
  }
  .right .dock-title {
    height: 40px;
    padding: 0 2px 3px 4px;
  }
  input[type='checkbox'] {
    appearance: none;
    flex: none;
    display: grid;
    place-items: center;
    width: 35px;
    height: 35px;
    background: linear-gradient(#ececec, #fff 5px);
    border: 1px solid #b8b8b8;
  }
  input[type='checkbox']:checked::before {
    content: '';
    width: 26px;
    height: 28px;
    background: #000;
    clip-path: polygon(0 55%, 14% 50%, 42% 82%, 82% 5%, 100% 0, 52% 98%, 36% 100%);
  }
  input[type='checkbox']:indeterminate::before {
    content: '';
    width: 25px;
    height: 25px;
    background: linear-gradient(#a2a2a2, #7c7c7c);
    border: 1px solid #333;
  }
  .order {
    display: flex;
    flex: none;
    height: 446px;
    background: #fff;
    border: 1px solid #b4b4b4;
  }
  .order ul {
    flex: 1;
    overflow: hidden;
    padding-top: 2px;
  }
  .order li {
    height: 41px;
    padding-left: 3px;
  }
  .order label {
    display: flex;
    align-items: center;
    gap: 7px;
    line-height: 41px;
  }
  .order label input {
    margin-bottom: 2px;
  }
  .scroll {
    width: 36px;
    display: flex;
    flex-direction: column;
    border-left: 1px solid #b4b4b4;
  }
  .scroll button {
    height: 35px;
    display: grid;
    place-items: center;
    background: linear-gradient(90deg, #fff, #f0f0f0);
  }
  .track {
    flex: 1;
    display: flex;
    align-items: flex-end;
    background: linear-gradient(90deg, #f2f2f2, #fff);
    border: solid #b4b4b4;
    border-width: 1px 0;
  }
  .thumb {
    width: 100%;
    height: 63px;
    background: #e3e3e3;
    border-top: 1px solid #b4b4b4;
  }
  .control {
    display: flex;
    align-items: center;
    gap: 14px;
    flex: none;
    height: 56px;
    padding-top: 12px;
    font-size: 25px;
  }
  .tabs {
    display: flex;
    align-items: flex-start;
    flex: none;
    height: 76px;
    font-size: 25px;
  }
  .tab {
    height: 58px;
    width: 156px;
    background: #dcdcdc;
    border: 1px solid #b8b8b8;
    border-radius: 0 0 3px 3px;
  }
  .tab.on {
    width: 201px;
    height: 60px;
    background: linear-gradient(#f0f0f0, #fcfcfc);
    border-top: 0;
    border-right: 0;
  }
  .tabs span {
    flex: 1;
    margin-top: 2px;
    border-top: 1px solid #b4b4b4;
  }
  .hgrip {
    align-self: center;
    width: 18px;
    height: 4px;
    margin-top: -9px;
    margin-bottom: 5px;
    background: radial-gradient(#bbb 1px, transparent 1px) 0 0 / 4px 4px;
  }
  .hgrip + .dock-title {
    height: 38px;
  }
  .dock-tools {
    display: flex;
    align-items: center;
    flex: none;
    height: 58px;
    padding: 0 0 3px 9px;
  }
  .dock-tools button {
    flex: none;
    display: grid;
    place-items: center;
    width: 42px;
    height: 42px;
  }
  .dock-tools .drop {
    width: 31px;
  }
  .right .dock-tools {
    height: 52px;
    margin-bottom: 4px;
    padding: 0 0 0 9px;
  }
  .dock-tools .sep {
    height: 38px;
  }
  .layers {
    flex: 1;
    min-height: 0;
    padding-top: 1px;
    background: #fff;
    border: 1px solid #b4b4b4;
  }
  .layers li {
    display: flex;
    align-items: center;
    height: 43px;
  }
  .layers .current {
    background: #efefef;
  }
  .twist {
    display: grid;
    place-items: center;
    flex: none;
    width: 50px;
  }
  .layers label {
    display: flex;
    align-items: center;
    gap: 7px;
    padding-left: 3px;
    font-size: 30px;
    font-weight: 700;
    font-style: italic;
    color: #808080;
  }
  .layers label svg {
    margin-left: -1px;
  }
  .layers label.on {
    color: #000;
    font-size: 28px;
    font-style: normal;
  }
  .current label span {
    text-decoration: underline;
    text-decoration-thickness: 2px;
    text-underline-offset: 4px;
  }
  .split {
    display: flex;
    align-items: center;
    justify-content: center;
  }
  .vgrip {
    width: 4px;
    height: 18px;
    background: radial-gradient(#bbb 1px, transparent 1px) 0 0 / 4px 4px;
  }
  .map {
    min-height: 0;
    background: #fff;
    border: 1px solid #b4b4b4;
  }
  .map svg {
    width: 100%;
    height: 100%;
  }
  .search {
    display: flex;
    align-items: center;
    flex: none;
    height: 46px;
    padding: 0 18px 0 15px;
    background: #fff;
    border: 1px solid #a8a8a8;
    border-radius: 4px;
    font-size: 26px;
  }
  .search input {
    flex: 1;
    padding-left: 9px;
  }
  .search button,
  .search button svg {
    width: 34px;
    height: 24px;
  }
  .tree {
    flex: 1;
    background: #fff;
    border: 1px solid #b4b4b4;
  }
  .tree li {
    display: flex;
    align-items: center;
    gap: 7px;
    height: 43px;
  }
  .tree li span:last-child {
    padding-top: 3px;
  }
  .tree .twist {
    width: 47px;
    padding-left: 2px;
  }
  .tree .child {
    padding-left: 104px;
  }
  .tree .hover {
    background: #efefef;
  }

  footer {
    display: flex;
    align-items: center;
    justify-content: space-between;
    flex: none;
    height: 54px;
    padding: 0 42px 0 7px;
    border-left: 3px solid #222;
    font-size: 26px;
    white-space: nowrap;
    background: #efefef;
  }
  .locator {
    display: flex;
    align-items: center;
    width: 489px;
    height: 45px;
    margin-left: -3px;
    padding-left: 14px;
    background: #fff;
    border: 1px solid #a8a8a8;
    border-radius: 4px;
    font-size: 27px;
  }
  .locator input {
    flex: 1;
    padding: 2px 0 0 10px;
  }
  .locator input::placeholder {
    color: #808080;
    opacity: 1;
  }
  .status {
    display: flex;
    align-items: center;
  }
  .box,
  .spin,
  .combo {
    height: 46px;
    background: #fff;
    border: 1px solid #a8a8a8;
    border-radius: 3px;
  }
  .field,
  .render {
    font-size: 25px;
    padding-top: 2px;
  }
  .field {
    padding-right: 4px;
  }
  .coord {
    width: 172px;
    padding: 2px 0 0 6px;
  }
  .mouse {
    width: 56px;
    padding-left: 4px;
  }
  .combo {
    display: flex;
    align-items: center;
    width: 180px;
    height: 41px;
    padding-right: 17px;
  }
  .combo select {
    flex: 1;
    appearance: none;
    padding: 2px 0 0 4px;
  }
  .lock {
    width: 56px;
    padding-left: 9px;
  }
  .spin {
    display: flex;
  }
  .spin input {
    flex: 1;
    padding: 2px 0 0 5px;
  }
  .spin div {
    width: 36px;
    display: flex;
    flex-direction: column;
    border-left: 1px solid #b4b4b4;
    background: linear-gradient(#fcfcfc, #eee);
  }
  .spin button {
    flex: 1;
    display: grid;
    place-items: center;
  }
  .mag {
    width: 161px;
  }
  .rot-label {
    padding-right: 9px;
    padding-left: 8px;
  }
  .rot {
    width: 136px;
  }
  .render {
    display: flex;
    align-items: center;
    gap: 15px;
    padding-left: 7px;
  }
  .crs {
    display: flex;
    align-items: center;
    padding: 2px 0 0 13px;
  }
  .chat {
    margin-left: 50px;
  }
</style>
